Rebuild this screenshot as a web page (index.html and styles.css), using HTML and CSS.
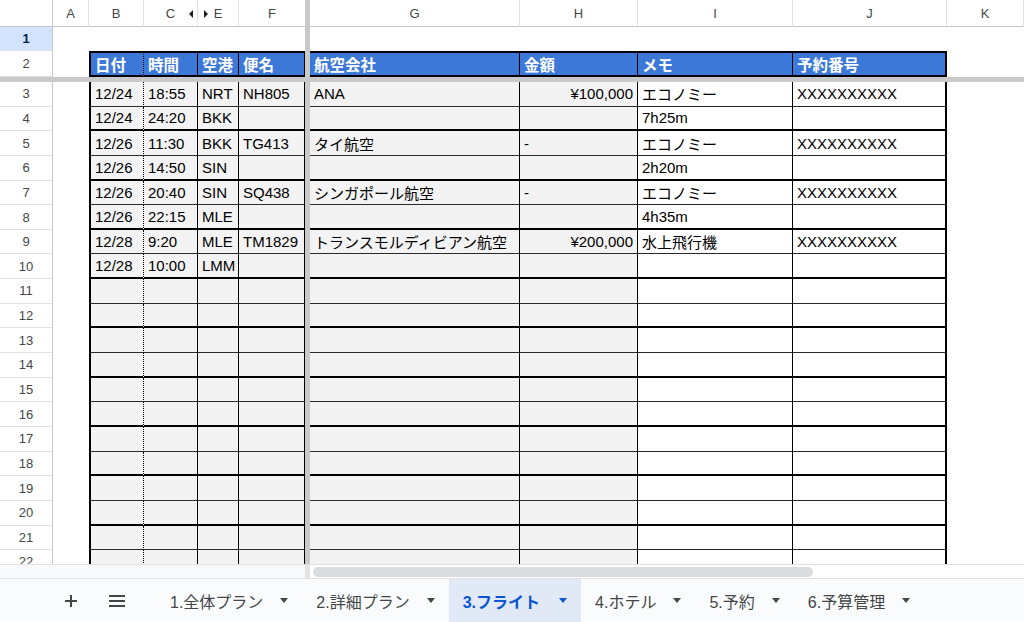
FILE: index.html
```html
<!DOCTYPE html>
<html lang="ja">
<head>
  <meta charset="UTF-8" />
  <title>3.フライト</title>
  <link rel="stylesheet" href="styles.css">
</head>
<body>
  <div class="sheet">
    <div class="row colhdr">
      <div class="rh corner"></div>
      <div class="ch a">A</div>
      <div class="ch b">B</div>
      <div class="ch c">C<span class="hid-l"></span></div>
      <div class="ch e"><span class="hid-r"></span>E</div>
      <div class="ch f">F</div>
      <div class="fz"></div>
      <div class="ch g">G</div>
      <div class="ch h">H</div>
      <div class="ch i">I</div>
      <div class="ch j">J</div>
      <div class="ch k">K</div>
    </div>

    <div class="row r1">
      <div class="rh sel">1</div>
      <div class="cell a"></div><div class="cell b"></div><div class="cell c"></div><div class="cell e"></div><div class="cell f"></div>
      <div class="fz"></div>
      <div class="cell g"></div><div class="cell h"></div><div class="cell i"></div><div class="cell j"></div><div class="cell k"></div>
    </div>

    <div class="row r2">
      <div class="rh">2</div>
      <div class="cell a"></div>
      <div class="cell hd b">日付</div><div class="cell hd c">時間</div><div class="cell hd e">空港</div><div class="cell hd f">便名</div>
      <div class="fz"></div>
      <div class="cell hd g">航空会社</div><div class="cell hd h">金額</div><div class="cell hd i">メモ</div><div class="cell hd j">予約番号</div>
      <div class="cell k"></div>
    </div>

    <div class="split"></div>

    <div class="row body thin">
      <div class="rh">3</div><div class="cell a"></div>
      <div class="cell t b">12/24</div><div class="cell t c">18:55</div><div class="cell t e">NRT</div><div class="cell t f">NH805</div>
      <div class="fz"></div>
      <div class="cell t g">ANA</div><div class="cell t h num">¥100,000</div><div class="cell t i">エコノミー</div><div class="cell t j">XXXXXXXXXX</div>
      <div class="cell k"></div>
    </div>
    <div class="row body thick">
      <div class="rh">4</div><div class="cell a"></div>
      <div class="cell t b">12/24</div><div class="cell t c">24:20</div><div class="cell t e">BKK</div><div class="cell t f"></div>
      <div class="fz"></div>
      <div class="cell t g"></div><div class="cell t h"></div><div class="cell t i">7h25m</div><div class="cell t j"></div>
      <div class="cell k"></div>
    </div>
    <div class="row body thin">
      <div class="rh">5</div><div class="cell a"></div>
      <div class="cell t b">12/26</div><div class="cell t c">11:30</div><div class="cell t e">BKK</div><div class="cell t f">TG413</div>
      <div class="fz"></div>
      <div class="cell t g">タイ航空</div><div class="cell t h">-</div><div class="cell t i">エコノミー</div><div class="cell t j">XXXXXXXXXX</div>
      <div class="cell k"></div>
    </div>
    <div class="row body thick">
      <div class="rh">6</div><div class="cell a"></div>
      <div class="cell t b">12/26</div><div class="cell t c">14:50</div><div class="cell t e">SIN</div><div class="cell t f"></div>
      <div class="fz"></div>
      <div class="cell t g"></div><div class="cell t h"></div><div class="cell t i">2h20m</div><div class="cell t j"></div>
      <div class="cell k"></div>
    </div>
    <div class="row body thin">
      <div class="rh">7</div><div class="cell a"></div>
      <div class="cell t b">12/26</div><div class="cell t c">20:40</div><div class="cell t e">SIN</div><div class="cell t f">SQ438</div>
      <div class="fz"></div>
      <div class="cell t g">シンガポール航空</div><div class="cell t h">-</div><div class="cell t i">エコノミー</div><div class="cell t j">XXXXXXXXXX</div>
      <div class="cell k"></div>
    </div>
    <div class="row body thick">
      <div class="rh">8</div><div class="cell a"></div>
      <div class="cell t b">12/26</div><div class="cell t c">22:15</div><div class="cell t e">MLE</div><div class="cell t f"></div>
      <div class="fz"></div>
      <div class="cell t g"></div><div class="cell t h"></div><div class="cell t i">4h35m</div><div class="cell t j"></div>
      <div class="cell k"></div>
    </div>
    <div class="row body thin">
      <div class="rh">9</div><div class="cell a"></div>
      <div class="cell t b">12/28</div><div class="cell t c">9:20</div><div class="cell t e">MLE</div><div class="cell t f">TM1829</div>
      <div class="fz"></div>
      <div class="cell t g">トランスモルディビアン航空</div><div class="cell t h num">¥200,000</div><div class="cell t i">水上飛行機</div><div class="cell t j">XXXXXXXXXX</div>
      <div class="cell k"></div>
    </div>
    <div class="row body thick">
      <div class="rh">10</div><div class="cell a"></div>
      <div class="cell t b">12/28</div><div class="cell t c">10:00</div><div class="cell t e">LMM</div><div class="cell t f"></div>
      <div class="fz"></div>
      <div class="cell t g"></div><div class="cell t h"></div><div class="cell t i"></div><div class="cell t j"></div>
      <div class="cell k"></div>
    </div>
    <div class="row body thin">
      <div class="rh">11</div><div class="cell a"></div>
      <div class="cell t b"></div><div class="cell t c"></div><div class="cell t e"></div><div class="cell t f"></div>
      <div class="fz"></div>
      <div class="cell t g"></div><div class="cell t h"></div><div class="cell t i"></div><div class="cell t j"></div>
      <div class="cell k"></div>
    </div>
    <div class="row body thick">
      <div class="rh">12</div><div class="cell a"></div>
      <div class="cell t b"></div><div class="cell t c"></div><div class="cell t e"></div><div class="cell t f"></div>
      <div class="fz"></div>
      <div class="cell t g"></div><div class="cell t h"></div><div class="cell t i"></div><div class="cell t j"></div>
      <div class="cell k"></div>
    </div>
    <div class="row body thin">
      <div class="rh">13</div><div class="cell a"></div>
      <div class="cell t b"></div><div class="cell t c"></div><div class="cell t e"></div><div class="cell t f"></div>
      <div class="fz"></div>
      <div class="cell t g"></div><div class="cell t h"></div><div class="cell t i"></div><div class="cell t j"></div>
      <div class="cell k"></div>
    </div>
    <div class="row body thick">
      <div class="rh">14</div><div class="cell a"></div>
      <div class="cell t b"></div><div class="cell t c"></div><div class="cell t e"></div><div class="cell t f"></div>
      <div class="fz"></div>
      <div class="cell t g"></div><div class="cell t h"></div><div class="cell t i"></div><div class="cell t j"></div>
      <div class="cell k"></div>
    </div>
    <div class="row body thin">
      <div class="rh">15</div><div class="cell a"></div>
      <div class="cell t b"></div><div class="cell t c"></div><div class="cell t e"></div><div class="cell t f"></div>
      <div class="fz"></div>
      <div class="cell t g"></div><div class="cell t h"></div><div class="cell t i"></div><div class="cell t j"></div>
      <div class="cell k"></div>
    </div>
    <div class="row body thick">
      <div class="rh">16</div><div class="cell a"></div>
      <div class="cell t b"></div><div class="cell t c"></div><div class="cell t e"></div><div class="cell t f"></div>
      <div class="fz"></div>
      <div class="cell t g"></div><div class="cell t h"></div><div class="cell t i"></div><div class="cell t j"></div>
      <div class="cell k"></div>
    </div>
    <div class="row body thin">
      <div class="rh">17</div><div class="cell a"></div>
      <div class="cell t b"></div><div class="cell t c"></div><div class="cell t e"></div><div class="cell t f"></div>
      <div class="fz"></div>
      <div class="cell t g"></div><div class="cell t h"></div><div class="cell t i"></div><div class="cell t j"></div>
      <div class="cell k"></div>
    </div>
    <div class="row body thick">
      <div class="rh">18</div><div class="cell a"></div>
      <div class="cell t b"></div><div class="cell t c"></div><div class="cell t e"></div><div class="cell t f"></div>
      <div class="fz"></div>
      <div class="cell t g"></div><div class="cell t h"></div><div class="cell t i"></div><div class="cell t j"></div>
      <div class="cell k"></div>
    </div>
    <div class="row body thin">
      <div class="rh">19</div><div class="cell a"></div>
      <div class="cell t b"></div><div class="cell t c"></div><div class="cell t e"></div><div class="cell t f"></div>
      <div class="fz"></div>
      <div class="cell t g"></div><div class="cell t h"></div><div class="cell t i"></div><div class="cell t j"></div>
      <div class="cell k"></div>
    </div>
    <div class="row body thick">
      <div class="rh">20</div><div class="cell a"></div>
      <div class="cell t b"></div><div class="cell t c"></div><div class="cell t e"></div><div class="cell t f"></div>
      <div class="fz"></div>
      <div class="cell t g"></div><div class="cell t h"></div><div class="cell t i"></div><div class="cell t j"></div>
      <div class="cell k"></div>
    </div>
    <div class="row body thin">
      <div class="rh">21</div><div class="cell a"></div>
      <div class="cell t b"></div><div class="cell t c"></div><div class="cell t e"></div><div class="cell t f"></div>
      <div class="fz"></div>
      <div class="cell t g"></div><div class="cell t h"></div><div class="cell t i"></div><div class="cell t j"></div>
      <div class="cell k"></div>
    </div>
    <div class="row body thick">
      <div class="rh">22</div><div class="cell a"></div>
      <div class="cell t b"></div><div class="cell t c"></div><div class="cell t e"></div><div class="cell t f"></div>
      <div class="fz"></div>
      <div class="cell t g"></div><div class="cell t h"></div><div class="cell t i"></div><div class="cell t j"></div>
      <div class="cell k"></div>
    </div>
  </div>

  <div class="hscroll">
    <div class="hs-left"></div>
    <div class="hs-fz"></div>
    <div class="hs-track"><div class="thumb"></div></div>
  </div>

  <div class="tabs">
    <div class="tb-btn add">
      <svg width="16" height="16" viewBox="0 0 16 16"><path d="M8 2v12M2 8h12" stroke="#444746" stroke-width="2" fill="none"/></svg>
    </div>
    <div class="tb-btn list">
      <svg width="18" height="14" viewBox="0 0 18 14"><path d="M1 2h16M1 7h16M1 12h16" stroke="#444746" stroke-width="2" fill="none"/></svg>
    </div>
    <div class="tab">1.全体プラン<span class="caret"></span></div>
    <div class="tab">2.詳細プラン<span class="caret"></span></div>
    <div class="tab active">3.フライト<span class="caret"></span></div>
    <div class="tab">4.ホテル<span class="caret"></span></div>
    <div class="tab">5.予約<span class="caret"></span></div>
    <div class="tab">6.予算管理<span class="caret"></span></div>
  </div>
</body>
</html>
```

FILE: styles.css
```css
body {
  margin: 0;
  width: 1024px;
  height: 622px;
  overflow: hidden;
  display: flex;
  flex-direction: column;
  font-family: "Liberation Sans", Arial, "Noto Sans CJK JP", sans-serif;
  color: #000;
  background: #fff;
}

/* grid */
.sheet {
  height: 564px;
  overflow: hidden;
  flex: none;
}
.row {
  display: flex;
  height: 24.65px;
}
.row.colhdr { height: 27px; }
.row.r1 { height: 24px; }
.row.r2 { height: 26px; }
.split {
  height: 5px;
  background: #c9c9c9;
}

.rh, .ch, .cell, .fz {
  box-sizing: border-box;
  flex: none;
}
.rh { width: 53px; }
.a { width: 36px; }
.b { width: 55px; }
.c { width: 54px; }
.e { width: 41px; }
.f { width: 66px; }
.fz { width: 5px; background: #c9c9c9; }
.g { width: 210px; }
.h { width: 118px; }
.i { width: 155px; }
.j { width: 154px; }
.k { flex: 1; }

/* headers */
.rh {
  display: flex;
  align-items: center;
  justify-content: center;
  font-size: 13px;
  color: #444746;
  border-right: 1px solid #c4c7c5;
  border-bottom: 1px solid #e1e1e1;
}
.rh.corner { border-bottom-color: #c4c7c5; }
.rh.sel {
  background: #d3e3fd;
  color: #041e49;
  font-weight: bold;
}
.ch {
  position: relative;
  display: flex;
  align-items: center;
  justify-content: center;
  font-size: 13px;
  color: #444746;
  border-right: 1px solid #e1e1e1;
  border-bottom: 1px solid #c4c7c5;
}
.ch.f { border-right: none; }
.hid-l, .hid-r {
  position: absolute;
  top: 10px;
  width: 0;
  height: 0;
  border-top: 4px solid transparent;
  border-bottom: 4px solid transparent;
}
.hid-l { right: 4px; border-right: 4px solid #1f1f1f; }
.hid-r { left: 6px; border-left: 4px solid #1f1f1f; }

/* cells */
.cell {
  display: flex;
  align-items: center;
  padding: 0 4px;
  font-size: 15px;
  white-space: nowrap;
  overflow: hidden;
}
.cell.num { justify-content: flex-end; }

.cell.hd {
  background: #3c78d8;
  color: #fff;
  font-weight: bold;
  font-size: 15.5px;
  border-top: 2px solid #000;
  border-bottom: 2px solid #000;
  border-right: 1px solid #000;
}
.cell.t {
  background: #f3f3f3;
  border-right: 1px solid #000;
}
.cell.t.i, .cell.t.j { background: #fff; }
.cell.t.b, .cell.hd.b {
  border-left: 2px solid #000;
  border-right: 1px dotted #000;
}
.cell.t.j, .cell.hd.j { border-right: 2px solid #000; }

.thin .cell.t { border-bottom: 1px solid #2a2a2a; }
.thick .cell.t { border-bottom: 2px solid #000; }

/* horizontal scroll */
.hscroll {
  height: 14px;
  flex: none;
  display: flex;
  border-top: 1px solid #e1e1e1;
  box-sizing: border-box;
}
.hs-left { width: 305px; background: #f8f9fa; }
.hs-fz { width: 5px; background: #e3e3e3; }
.hs-track {
  flex: 1;
  display: flex;
  align-items: center;
  padding-left: 3px;
}
.thumb {
  width: 500px;
  height: 10px;
  border-radius: 5px;
  background: #dadce0;
}

/* sheet tabs */
.tabs {
  flex: 1;
  display: flex;
  align-items: stretch;
  padding-left: 57px;
  background: #f9fbfd;
  border-top: 1px solid #e3e3e3;
}
.tb-btn {
  width: 28px;
  display: flex;
  align-items: center;
  justify-content: center;
}
.tb-btn.add { margin-right: 18px; }
.tb-btn.list { margin-right: 25px; }
.tab {
  display: flex;
  align-items: center;
  gap: 17px;
  padding: 0 14px;
  font-size: 16px;
  color: #444746;
  white-space: nowrap;
}
.tab.active {
  gap: 19px;
  background: #e1e9f7;
  color: #0b57d0;
  font-weight: bold;
}
.caret {
  width: 0;
  height: 0;
  border-left: 4.5px solid transparent;
  border-right: 4.5px solid transparent;
  border-top: 5px solid currentColor;
}
```
